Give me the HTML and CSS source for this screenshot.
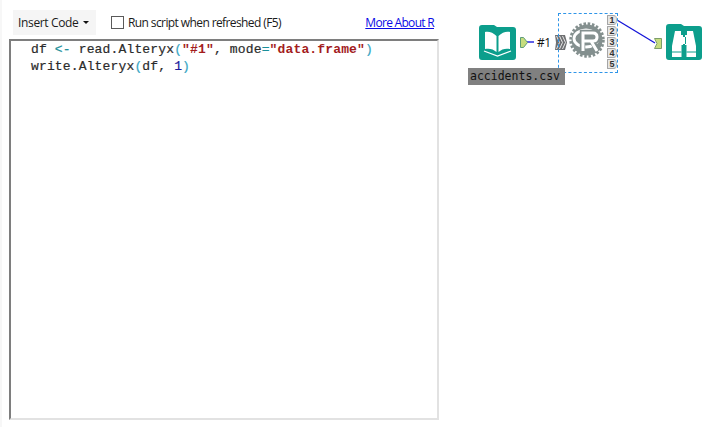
FILE: index.html
```html
<!DOCTYPE html>
<html lang="en">
<head>
<meta charset="utf-8">
<title>R Tool</title>
<link rel="stylesheet" href="styles.css">
</head>
<body>
<div class="page">
  <section class="config">
    <div class="toolbar">
      <button class="insert" type="button">Insert Code<span class="caret"></span></button>
      <label class="refresh"><span class="check"></span>Run script when refreshed (F5)</label>
      <a class="about" href="#">More About R</a>
    </div>
    <div class="editor">
<pre class="code">df <span class="op">&lt;-</span> read.Alteryx<span class="paren">(</span><span class="str">"#1"</span>, mode<span class="op">=</span><span class="str">"data.frame"</span><span class="paren">)</span>
write.Alteryx<span class="paren">(</span>df, <span class="num">1</span><span class="paren">)</span></pre>
    </div>
  </section>
  <section class="canvas">
    <svg class="wire" width="704" height="427" viewBox="0 0 704 427">
      <path d="M527 42H534" stroke="#2a2ae0" stroke-width="1.500" fill="none"/>
      <path d="M617 20L655 43" stroke="#1414d8" stroke-width="1.300" fill="none"/>
    </svg>

    <svg class="node input" width="37" height="36" viewBox="0 0 37 36">
      <path d="M0 4a3 3 0 0 1 3-3h12l3 2h16a3 3 0 0 1 3 3v27a3 3 0 0 1-3 3H3a3 3 0 0 1-3-3z" fill="#0c9e8c"/>
      <path d="M17.500 12C14 8 9 7 6 8v17c4-1 8.500 0 11.500 3zM19.500 12c3.500-4 8.500-5 11.500-4v17c-4-1-8.500 0-11.500 3z" fill="#fff"/>
      <path d="M5 27l13.500 5 13.500-5" stroke="#fff" stroke-width="1.300" fill="none"/>
    </svg>
    <svg class="node anchor-out" width="8" height="11" viewBox="0 0 8 11">
      <path d="M.5.5h3l4 5-4 5h-3z" fill="#c6dd7e" stroke="#5f9d78"/>
    </svg>
    <span class="wire-label">#1</span>
    <svg class="node anchor-in" width="12" height="15" viewBox="0 0 12 15">
      <path d="M0 0h10l2 7.500-2 7.500H0l1-7.500z" fill="#6f7072"/>
      <path d="M1.500 1l3 6.500-3 6.500M4.500 1l3 6.500-3 6.500M7.500 1l3 6.500-3 6.500" stroke="#e8e8e8" stroke-width="1" fill="none"/>
    </svg>

    <div class="selection"></div>
    <svg class="node rtool" width="36" height="36" viewBox="0 0 36 36">
      <circle cx="18" cy="18" r="16" fill="none" stroke="#84908f" stroke-width="3.500" stroke-dasharray="2.500 1.700"/>
      <circle cx="18" cy="18" r="15.500" fill="#84908f"/>
      <ellipse cx="17" cy="16.500" rx="12" ry="8.500" fill="none" stroke="#fff" stroke-width="2.800"/>
      <path d="M13.500 29V10.500h10.500q5 0 5 4.500t-5 4.500h-8m7 0l6.500 9.500" fill="none" stroke="#84908f" stroke-width="5.500"/>
      <path d="M14 29V11h10q4 0 4 4t-4 4h-9m7 0l6 10" fill="none" stroke="#fff" stroke-width="3"/>
    </svg>
    <ul class="ports">
      <li>1</li><li>2</li><li>3</li><li>4</li><li>5</li>
    </ul>

    <svg class="node anchor-browse" width="8" height="11" viewBox="0 0 8 11">
      <path d="M.5.5h7v10h-7l2.500-5z" fill="#c6dd7e" stroke="#7d9d6a"/>
    </svg>
    <svg class="node browse" width="36" height="36" viewBox="0 0 36 36">
      <path d="M0 3a3 3 0 0 1 3-3h12l3 2h15a3 3 0 0 1 3 3v28a3 3 0 0 1-3 3H3a3 3 0 0 1-3-3z" fill="#0c9e8c"/>
      <path d="M9 7h6v4h2v10h-1.500v12H6v-11zM27 7h-6v4h-2v10h1.500v12H30v-11zM16 13h4v7h-4z" fill="#fff"/>
      <path d="M6 28h9.500M20.500 28h9.500" stroke="#0c9e8c" stroke-width="1"/>
    </svg>

    <div class="annotation">accidents.csv</div>
  </section>
</div>
</body>
</html>
```
FILE: styles.css
```css
html, body {
  margin: 0;
  padding: 0;
  background: #fff;
}

.page {
  display: flex;
  width: 704px;
  height: 427px;
  overflow: hidden;
  border-left: 2px solid #f7f7f7;
  box-sizing: border-box;
}

.config {
  display: flex;
  flex-direction: column;
  width: 437px;
  flex: none;
  padding: 10px 0 7px 7px;
  box-sizing: border-box;
}

.toolbar {
  display: flex;
  align-items: center;
  height: 25px;
  padding-left: 4px;
  font: 12px/16px "Open Sans", "Liberation Sans", sans-serif;
  color: #1a1a1a;
}

.insert {
  display: flex;
  align-items: center;
  width: 83px;
  height: 25px;
  padding: 0 0 0 5px;
  border: 0;
  background: #f5f5f5;
  font: inherit;
  color: inherit;
  letter-spacing: -0.35px;
}

.caret {
  width: 0;
  height: 0;
  margin-left: 5px;
  border-left: 3px solid transparent;
  border-right: 3px solid transparent;
  border-top: 3px solid #111;
}

.refresh {
  display: flex;
  align-items: center;
  margin-left: 15px;
  letter-spacing: -0.6px;
}

.check {
  width: 11px;
  height: 11px;
  margin-right: 4px;
  border: 1px solid #5a5a5a;
  background: #fff;
}

.about {
  margin-left: auto;
  margin-right: 5px;
  color: #0a0ae6;
  letter-spacing: -0.7px;
}

.editor {
  flex: 1;
  margin-top: 4px;
  background: #fff;
  border-style: solid;
  border-width: 2px;
  border-color: #7e7e7e #e2e2e2 #e2e2e2 #7e7e7e;
}

.code {
  margin: 0;
  padding: 0 0 0 20px;
  font: 13px/17px "Liberation Mono", monospace;
  letter-spacing: 0.15px;
  -webkit-text-stroke: 0.2px currentColor;
  color: #2b2b2b;
}

.op { color: #1a8f9a; }
.paren { color: #3aa7c4; }
.str { color: #a31d1d; font-weight: 700; -webkit-text-stroke: 0; }
.num { color: #1c1c9c; }

.canvas {
  position: relative;
  flex: 1;
}

.wire {
  position: absolute;
  left: -439px;
  top: 0;
}

.node {
  position: absolute;
  display: block;
}

.input { left: 40px; top: 24px; }
.anchor-out { left: 81px; top: 37px; }
.wire-label {
  position: absolute;
  left: 98px;
  top: 35px;
  font: 12px/16px "Open Sans", "Liberation Sans", sans-serif;
  letter-spacing: -0.5px;
  color: #111;
}
.anchor-in { left: 116px; top: 35px; }
.rtool { left: 130px; top: 22px; }
.anchor-browse { left: 215px; top: 38px; }
.browse { left: 227px; top: 24px; }

.selection {
  position: absolute;
  left: 119px;
  top: 13px;
  width: 58px;
  height: 58px;
  border: 1px dashed #2f95e8;
}

.ports {
  position: absolute;
  left: 168px;
  top: 15px;
  display: flex;
  flex-direction: column;
  gap: 1px;
  margin: 0;
  padding: 0;
  list-style: none;
}

.ports li {
  width: 8px;
  height: 8px;
  border: 1px solid #a5a5a5;
  border-right-color: #bdbdbd;
  border-radius: 1px 4px 4px 1px;
  background: #e6e6e6;
  font: 700 9px/8px "Liberation Sans", sans-serif;
  text-align: center;
  color: #333;
}

.annotation {
  position: absolute;
  left: 29px;
  top: 68px;
  width: 97px;
  height: 17px;
  padding-left: 2px;
  box-sizing: border-box;
  background: #808080;
  font: 11.5px/16px "DejaVu Sans Mono", monospace;
  color: #111;
}
```
